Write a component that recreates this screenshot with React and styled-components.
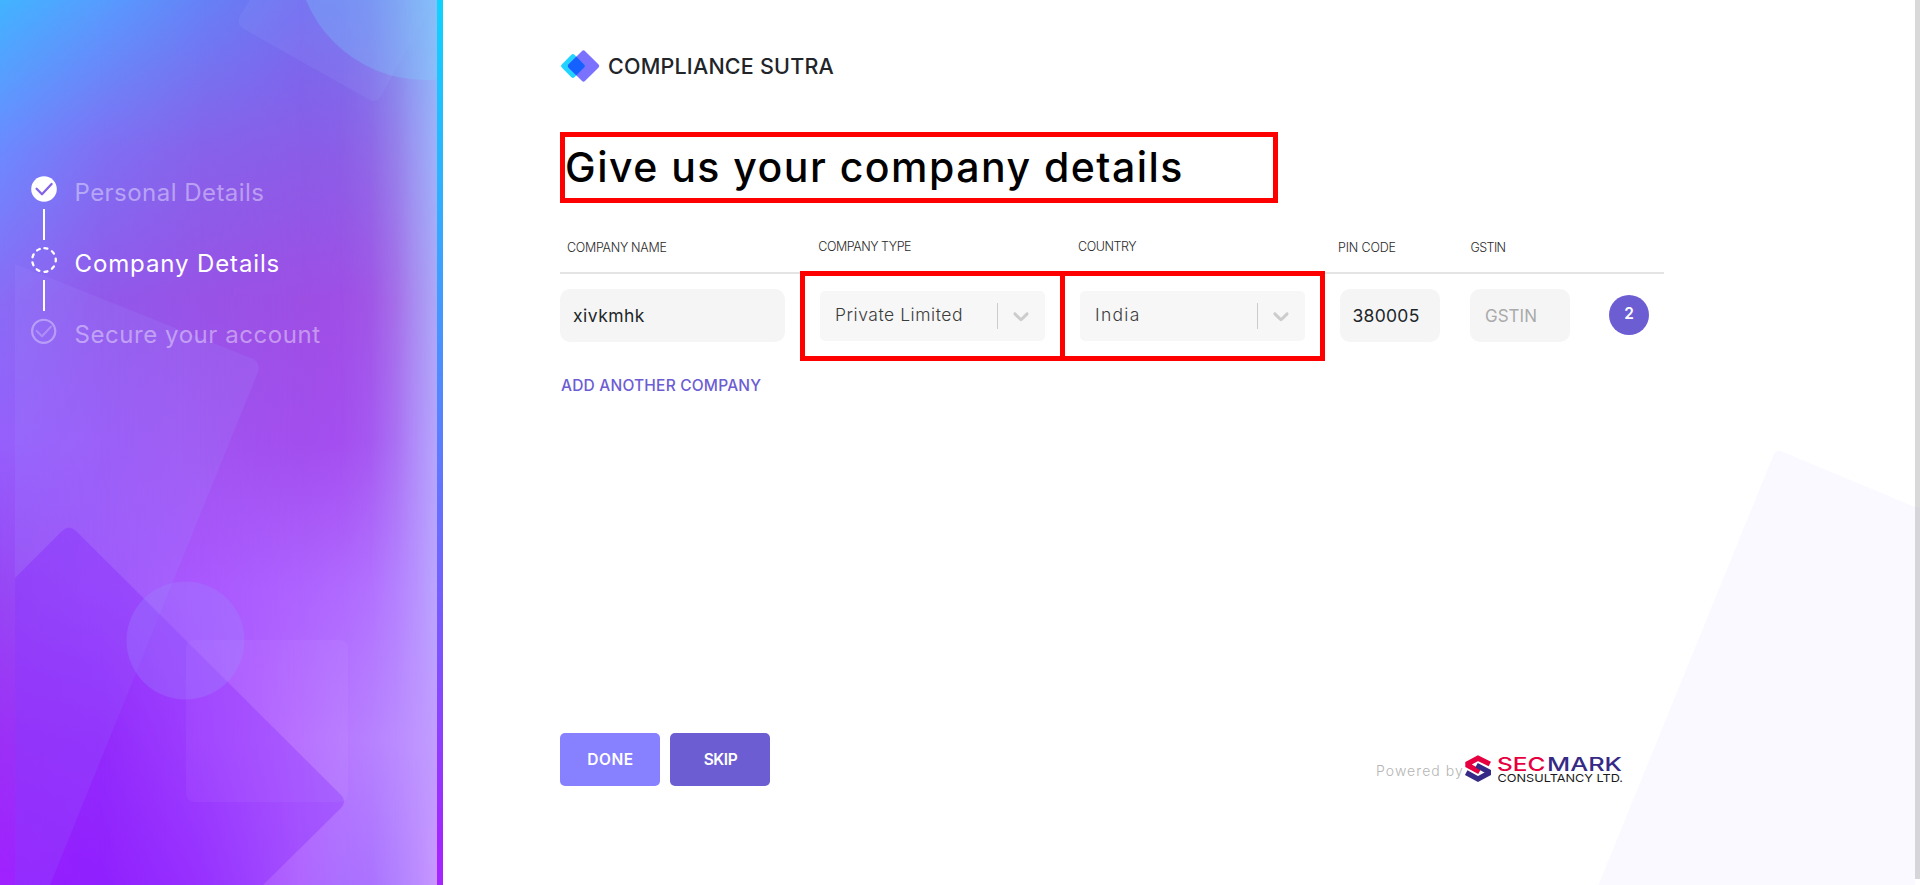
import React from 'react';
import styled, { createGlobalStyle } from 'styled-components';

const GlobalStyle = createGlobalStyle`
  *, *::before, *::after { box-sizing: border-box; }
  body {
    margin: 0;
    background: #fff;
    color: #212529;
    font-family: Inter, "Open Sans", sans-serif;
    overflow: hidden;
  }
  button, input { font-family: inherit; }
`;

const Page = styled.div`
  position: relative;
  display: flex;
  width: 1920px;
  height: 885px;
  overflow: hidden;
  background: #fff;
`;

/* ---------- sidebar ---------- */

const Sidebar = styled.aside`
  position: relative;
  flex: none;
  width: 437px;
  height: 100%;
  padding: 176px 0 0 31px;
  overflow: hidden;
`;

const SidebarArt = styled.svg`
  position: absolute;
  inset: 0;
`;

const Stripe = styled.div`
  flex: none;
  width: 6px;
  height: 100%;
  background: linear-gradient(180deg, #0fd2ff 0%, #2fb0ff 22%, #5b7dff 50%, #7f50ff 75%, #a524ff 96%);
`;

const Stepper = styled.ol`
  position: relative;
  margin: 0;
  padding: 0;
  list-style: none;
`;

const Step = styled.li`
  display: flex;
  gap: 17px;
  height: 71px;
  color: ${(p) => (p.$active ? '#fff' : 'rgba(255, 255, 255, 0.42)')};
`;

const Rail = styled.div`
  display: flex;
  flex-direction: column;
  align-items: center;
  gap: 7px;
  width: 26px;
`;

const Connector = styled.div`
  width: 2px;
  height: 31px;
  background: #fff;
`;

const StepLabel = styled.span`
  padding-left: 0.5px;
  font-size: 24px;
  line-height: 33px;
  letter-spacing: ${(p) => p.$spacing}px;
  white-space: nowrap;
`;

/* ---------- main column ---------- */

const Main = styled.main`
  position: relative;
  flex: 1;
  display: flex;
  flex-direction: column;
  align-items: flex-start;
  padding: 49px 0 0 117px;
`;

const MainShape = styled.svg`
  position: absolute;
  right: 0;
  bottom: 0;
`;

const Scrollbar = styled.div`
  position: relative;
  flex: none;
  width: 5px;
  height: 879px;
  background: linear-gradient(180deg, #d9d9d9 0 507px, #d6d5da 507px);
`;

const Brand = styled.div`
  display: flex;
  align-items: center;
  gap: 8px;
  height: 34px;
`;

const BrandName = styled.span`
  font-size: 21.5px;
  font-weight: 500;
  line-height: 34px;
  letter-spacing: 0.21px;
`;

const Title = styled.h1`
  width: 718px;
  height: 71px;
  margin: 49px 0 0;
  border: 5px solid #f00;
  color: #000;
  font-size: 41px;
  font-weight: 500;
  line-height: 61px;
  letter-spacing: 1.48px;
  white-space: nowrap;
`;

const TableHead = styled.div`
  display: flex;
  width: 1104px;
  height: 71px;
  padding-top: 34px;
  border-bottom: 2px solid #e4e4e4;
`;

const HeadCell = styled.div`
  flex: none;
  width: ${(p) => p.$width}px;
  margin-top: ${(p) => (p.$raised ? -1 : 0)}px;
  padding-left: ${(p) => p.$inset}px;
  color: #2a2a2a;
  font-size: 12.5px;
  font-weight: 300;
  line-height: 21px;
  letter-spacing: ${(p) => p.$spacing}px;
  white-space: nowrap;
`;

const TableRow = styled.div`
  position: relative;
  display: flex;
  width: 1104px;
  height: 90px;
  margin-top: -3px;
`;

const Field = styled.input`
  flex: none;
  width: ${(p) => p.$width}px;
  height: 53px;
  margin: 18px ${(p) => p.$after}px 0 0;
  padding: 0 0 1px ${(p) => p.$inset}px;
  border: 0;
  border-radius: 10px;
  outline: 0;
  background: #f5f5f5;
  color: #212529;
  font-size: 17.5px;
  letter-spacing: ${(p) => p.$spacing}px;
  &::placeholder { color: #aaa; opacity: 1; font-size: 17px; }
`;

const SelectFrame = styled.div`
  flex: none;
  width: 265px;
  height: 90px;
  margin-right: ${(p) => p.$after}px;
  padding: 15px;
  border: 5px solid #f00;
`;

const Select = styled.div`
  display: flex;
  align-items: center;
  height: 50px;
  padding: 0 11px 0 15px;
  border-radius: 5px;
  background: #f7f7f7;
  color: #3c3c3c;
`;

const SelectValue = styled.span`
  flex: 1;
  padding-bottom: 2px;
  font-size: 17.5px;
  font-weight: 300;
  line-height: 22px;
  letter-spacing: ${(p) => p.$spacing}px;
  white-space: nowrap;
`;

const Separator = styled.span`
  width: 1px;
  height: 26px;
  margin-right: 10px;
  background: #ccc;
`;

const CountBadge = styled.div`
  flex: none;
  display: flex;
  justify-content: center;
  width: 40px;
  height: 40px;
  margin-top: 24px;
  border-radius: 50%;
  background: #6c5dd3;
  color: #fff;
  font-size: 15.5px;
  font-weight: 600;
  line-height: 37px;
`;

const AddLink = styled.button`
  margin: 14px 0 0;
  padding: 0 0 0 1px;
  border: 0;
  background: none;
  color: #6c5dd3;
  font-size: 15.5px;
  font-weight: 500;
  line-height: 22px;
  letter-spacing: 0.2px;
`;

const Footer = styled.footer`
  position: relative;
  display: flex;
  width: 1104px;
  height: 53px;
  margin-top: 336px;
`;

const Button = styled.button`
  width: 100px;
  height: 53px;
  margin-right: 10px;
  padding: 0 0 0 1px;
  border: 0;
  border-radius: 5px;
  background: ${(p) => (p.$dark ? '#6c5dd3' : '#8780ff')};
  color: #fff;
  font-size: 15.5px;
  font-weight: 600;
  line-height: 53px;
  letter-spacing: ${(p) => p.$spacing}px;
`;

const Powered = styled.div`
  display: flex;
  align-items: flex-start;
  margin-left: 596px;
  padding-top: 16px;
`;

const PoweredText = styled.span`
  margin-top: 11px;
  color: #b5b5b5;
  font-size: 14px;
  font-weight: 300;
  line-height: 22px;
  letter-spacing: 1.06px;
`;

/* ---------- artwork ---------- */

const meshRows = [0, 150, 300, 443, 590, 740, 885];
const mesh = [
  { x: 0, colors: ['#42b4ff', '#6c8aff', '#8a6cf6', '#9660fc', '#9747f5', '#9c30f6', '#a021ff'] },
  { x: 100, colors: ['#569dff', '#7f70f3', '#9159ea', '#9a58f7', '#a050fa', '#9a34fa', '#9826ff'] },
  { x: 200, colors: ['#6682f6', '#8762ea', '#9853e6', '#a154f0', '#aa58ff', '#aa50ff', '#a13dff'] },
  { x: 300, colors: ['#736df0', '#8a5de7', '#9d4fe4', '#a24eee', '#ae63ff', '#b56cff', '#b066ff'] },
  { x: 340, colors: ['#7470ee', '#8b5ee7', '#9f4fe5', '#a44ef0', '#b069ff', '#b678ff', '#ac70ff'] },
  { x: 370, colors: ['#787aee', '#8f68e7', '#a056e6', '#a658f1', '#b271ff', '#b781ff', '#ab72ff'] },
  { x: 395, colors: ['#7e8fef', '#957fea', '#a56ee9', '#aa70f4', '#b480ff', '#ba8bff', '#b180ff'] },
  { x: 415, colors: ['#84a4f3', '#9b99f2', '#a98df0', '#b08cf9', '#b891ff', '#be94ff', '#ba8aff'] },
  { x: 437, colors: ['#8ab5f7', '#9fb2fa', '#ada8f8', '#b6a6fd', '#bba6ff', '#c19eff', '#c898ff'] },
];

function SidebarBackground() {
  return (
    <SidebarArt width="437" height="885" viewBox="0 0 437 885">
      <defs>
        {mesh.map((col, i) => (
          <linearGradient key={col.x} id={`col${i}`} x1="0" y1="0" x2="0" y2="885" gradientUnits="userSpaceOnUse">
            {col.colors.map((c, r) => (
              <stop key={r} offset={meshRows[r] / 885} stopColor={c} />
            ))}
          </linearGradient>
        ))}
        {mesh.slice(1).map((col, i) => (
          <React.Fragment key={col.x}>
            <linearGradient id={`fade${i + 1}`} x1={mesh[i].x} x2={col.x} y1="0" y2="0" gradientUnits="userSpaceOnUse">
              <stop offset="0" stopColor="#fff" stopOpacity="0" />
              <stop offset="1" stopColor="#fff" stopOpacity="1" />
            </linearGradient>
            <mask id={`mask${i + 1}`} maskUnits="userSpaceOnUse" x="0" y="0" width="437" height="885">
              <rect width="437" height="885" fill={`url(#fade${i + 1})`} />
            </mask>
          </React.Fragment>
        ))}
        <clipPath id="inset"><rect x="15" y="0" width="422" height="885" /></clipPath>
      </defs>
      {mesh.map((col, i) => (
        <rect key={col.x} width="437" height="885" fill={`url(#col${i})`} mask={i ? `url(#mask${i})` : undefined} />
      ))}
      <path d="M252 -4 L240 16 Q236 24 244 29 L368 99 Q376 104 381 96 L437 -4 Z" fill="#a0b4ff" fillOpacity="0.12" />
      <circle cx="425" cy="-48.5" r="128.5" fill="#78dcff" fillOpacity="0.24" />
      <g clipPath="url(#inset)">
        <path d="M0 258 L253 359 Q261 363 258 372 L50 885 H0 Z" fill="#a08cff" fillOpacity="0.19" />
        <path d="M-10 603 L62 531 Q69 524 76 531 L341 795 Q347 801 341 808 L263 885 H-10 Z" fill="#7a10ff" fillOpacity="0.26" />
      </g>
      <circle cx="185.5" cy="640.5" r="59" fill="#9c8cff" fillOpacity="0.28" />
      <rect x="186" y="640" width="162" height="162" rx="8" fill="#fff" fillOpacity="0.045" />
    </SidebarArt>
  );
}

function StepIcon({ state }) {
  if (state === 'done') {
    return (
      <svg width="26" height="26" viewBox="0 0 26 26" fill="none">
        <circle cx="13" cy="13" r="12.8" fill="#fff" />
        <path d="M5.6 12.8 L11 18.2 L20.6 8" stroke="#8463ea" strokeWidth="2.3" strokeLinecap="round" strokeLinejoin="round" />
      </svg>
    );
  }
  if (state === 'current') {
    return (
      <svg width="26" height="26" viewBox="0 0 26 26" fill="none">
        <circle cx="13" cy="13" r="11.8" stroke="#fff" strokeWidth="2.3" strokeLinecap="round" strokeDasharray="3 5.24" transform="rotate(-88 13 13)" />
      </svg>
    );
  }
  return (
    <svg width="26" height="26" viewBox="0 0 26 26" fill="none" stroke="#fff" strokeLinecap="round" strokeLinejoin="round">
      <circle cx="12.7" cy="13.3" r="11.6" strokeWidth="2.1" strokeOpacity="0.35" />
      <path d="M5.6 13 L11 18.2 L20 8.6" strokeWidth="2.1" strokeOpacity="0.25" />
    </svg>
  );
}

function BrandMark() {
  return (
    <svg width="40" height="34" viewBox="0 0 40 34">
      <defs>
        <clipPath id="bigDiamond">
          <rect x="11.8" y="5.3" width="23.4" height="23.4" rx="2.4" transform="rotate(45 23.5 17)" />
        </clipPath>
      </defs>
      <rect x="3.9" y="8" width="18" height="18" rx="2.2" fill="#23d3ff" transform="rotate(45 12.9 17)" />
      <rect x="11.8" y="5.3" width="23.4" height="23.4" rx="2.4" fill="#7a72ff" transform="rotate(45 23.5 17)" />
      <g clipPath="url(#bigDiamond)">
        <rect x="3.9" y="8" width="18" height="18" rx="2.2" fill="#1461ff" transform="rotate(45 12.9 17)" />
      </g>
    </svg>
  );
}

function SecmarkLogo() {
  return (
    <svg width="162" height="38" viewBox="-1 -6 162 38">
      <g fill="none" strokeWidth="5.2">
        <path d="M24.8 9 L13 3.1 L2.9 8.6 V10.4 L14.5 16.8" stroke="#e6003f" />
        <path d="M11.5 10.2 L23.4 16.6 V18.4 L13 24 L1.2 17.6" stroke="#352a86" />
      </g>
      <g fontFamily="Inter, sans-serif">
        <g fontSize="19" fontWeight="500">
          <text x="32" y="16" textLength="48.5" lengthAdjust="spacingAndGlyphs" fill="#e6003f">SEC</text>
          <text x="82" y="16" textLength="75" lengthAdjust="spacingAndGlyphs" fill="#352a86">MARK</text>
        </g>
        <text x="32.5" y="27" fontSize="11" fontWeight="400" textLength="125.5" lengthAdjust="spacingAndGlyphs" fill="#1b1b1b">CONSULTANCY LTD.</text>
      </g>
    </svg>
  );
}

function Chevron() {
  return (
    <svg width="26" height="26" viewBox="0 0 20 20" fill="#ccc">
      <path d="M4.516 7.548c0.436-0.446 1.043-0.481 1.576 0l3.908 3.747 3.908-3.747c0.533-0.481 1.141-0.446 1.574 0 0.436 0.445 0.408 1.197 0 1.615-0.406 0.418-4.695 4.502-4.695 4.502-0.217 0.223-0.502 0.335-0.787 0.335s-0.57-0.112-0.789-0.335c0 0-4.287-4.084-4.695-4.502s-0.436-1.17 0-1.615z" />
    </svg>
  );
}

function Dropdown({ value, spacing, after }) {
  return (
    <SelectFrame $after={after}>
      <Select>
        <SelectValue $spacing={spacing}>{value}</SelectValue>
        <Separator />
        <Chevron />
      </Select>
    </SelectFrame>
  );
}

const steps = [
  { label: 'Personal Details', state: 'done', spacing: 0.46 },
  { label: 'Company Details', state: 'current', spacing: 0.88 },
  { label: 'Secure your account', state: 'pending', spacing: 0.56 },
];

const columns = [
  { label: 'COMPANY NAME', width: 251, inset: 7, spacing: -0.3 },
  { label: 'COMPANY TYPE', width: 260, inset: 7.3, spacing: -0.47 },
  { label: 'COUNTRY', width: 260, inset: 7, spacing: -0.45 },
  { label: 'PIN CODE', width: 130, inset: 7, spacing: -0.17 },
  { label: 'GSTIN', width: 130, inset: 9.5, spacing: -0.58 },
].map((col) => ({ ...col, raised: col.width === 260 }));

export default function App() {
  return (
    <Page>
      <GlobalStyle />
      <Sidebar>
        <SidebarBackground />
        <Stepper>
          {steps.map((step, i) => (
            <Step key={step.label} $active={step.state === 'current'}>
              <Rail>
                <StepIcon state={step.state} />
                {i < steps.length - 1 && <Connector />}
              </Rail>
              <StepLabel $spacing={step.spacing}>{step.label}</StepLabel>
            </Step>
          ))}
        </Stepper>
      </Sidebar>
      <Stripe />
      <Main>
        <MainShape width="322" height="440" viewBox="0 0 322 440">
          <path d="M5.5 440 L180.5 10 Q183 4 190 7 L322 62 V440 Z" fill="#faf9ff" />
        </MainShape>
        <Brand>
          <BrandMark />
          <BrandName>COMPLIANCE SUTRA</BrandName>
        </Brand>
        <Title>Give us your company details</Title>
        <TableHead>
          {columns.map((col) => (
            <HeadCell key={col.label} $width={col.width} $inset={col.inset} $spacing={col.spacing} $raised={col.raised}>
              {col.label}
            </HeadCell>
          ))}
        </TableHead>
        <TableRow>
          <Field $width={225} $after={15} $inset={13} $spacing={0.48} defaultValue="xivkmhk" />
          <Dropdown value="Private Limited" spacing={0.54} after={-5} />
          <Dropdown value="India" spacing={1.3} after={15} />
          <Field $width={100} $after={30} $inset={12.5} $spacing={0.28} defaultValue="380005" />
          <Field $width={100} $after={39} $inset={15} $spacing={0} placeholder="GSTIN" />
          <CountBadge>2</CountBadge>
        </TableRow>
        <AddLink>ADD ANOTHER COMPANY</AddLink>
        <Footer>
          <Button $spacing={0.54}>DONE</Button>
          <Button $dark $spacing={-0.42}>SKIP</Button>
          <Powered>
            <PoweredText>Powered by</PoweredText>
            <SecmarkLogo />
          </Powered>
        </Footer>
      </Main>
      <Scrollbar />
    </Page>
  );
}
